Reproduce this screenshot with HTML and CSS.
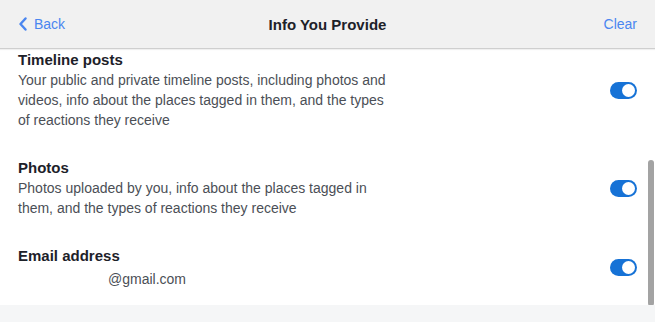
FILE: index.html
```html
<!DOCTYPE html>
<html>
<head>
<meta charset="utf-8">
<link rel="stylesheet" href="styles.css">
</head>
<body>
<div class="page">
  <header class="topbar">
    <a class="back">
      <svg class="chev" width="10" height="14" viewBox="0 0 10 14"><path d="M7.5 1.5 L2.5 7 L7.5 12.5" fill="none" stroke="#4a86f0" stroke-width="2.4" stroke-linecap="round" stroke-linejoin="round"/></svg>
      <span>Back</span>
    </a>
    <div class="title">Info You Provide</div>
    <a class="clear">Clear</a>
  </header>
  <main class="viewport">
    <div class="list">
      <section class="item">
        <div class="text">
          <div class="name">Timeline posts</div>
          <div class="desc">Your public and private timeline posts, including photos and videos, info about the places tagged in them, and the types of reactions they receive</div>
        </div>
        <div class="toggle"><div class="knob"></div></div>
      </section>
      <section class="item">
        <div class="text">
          <div class="name">Photos</div>
          <div class="desc">Photos uploaded by you, info about the places tagged in them, and the types of reactions they receive</div>
        </div>
        <div class="toggle"><div class="knob"></div></div>
      </section>
      <section class="item">
        <div class="text">
          <div class="name">Email address</div>
          <div class="desc email"><span class="hidden-part"></span>@gmail.com</div>
        </div>
        <div class="toggle"><div class="knob"></div></div>
      </section>
    </div>
    <div class="scrollthumb"></div>
  </main>
  <div class="footer"></div>
</div>
</body>
</html>
```
FILE: styles.css
```css
* { box-sizing: border-box; }
html, body { margin: 0; padding: 0; }
body {
  font-family: "Liberation Sans", Arial, sans-serif;
  background: #ffffff;
  width: 655px;
  height: 322px;
  overflow: hidden;
}
.page { display: flex; flex-direction: column; height: 322px; }
.topbar {
  height: 49px;
  flex: none;
  background: #f1f1f1;
  border-bottom: 1px solid #cfcfcf;
  display: flex;
  align-items: center;
  justify-content: space-between;
  padding: 0 18px 0 18px;
  position: relative;
  z-index: 2;
  box-shadow: 0 1px 1px rgba(0,0,0,0.06);
}
.back {
  display: flex;
  align-items: center;
  gap: 6px;
  color: #4a86f0;
  font-size: 14px;
  width: 80px;
}
.chev { display: block; }
.title {
  font-weight: bold;
  font-size: 15px;
  color: #1d2129;
}
.clear {
  color: #4a86f0;
  font-size: 14px;
  width: 80px;
  text-align: right;
}
.viewport {
  flex: 1;
  position: relative;
  overflow: hidden;
  background: #ffffff;
}
.list { margin-top: -13px; }
.item {
  display: flex;
  align-items: center;
  justify-content: space-between;
  padding: 14px 18px 14px 18px;
}
.text { width: 372px; }
.name {
  font-weight: bold;
  font-size: 15px;
  line-height: 20px;
  color: #1d2129;
}
.desc {
  font-size: 14px;
  line-height: 20px;
  color: #4b4f56;
}
.desc.email { margin-top: 3px; }
.hidden-part { display: inline-block; width: 90px; }
.toggle {
  width: 27px;
  height: 17px;
  border-radius: 9px;
  background: #1672d6;
  position: relative;
  display: flex;
  justify-content: flex-end;
  align-items: center;
  padding: 2px;
}
.knob {
  width: 13px;
  height: 13px;
  border-radius: 50%;
  background: #ffffff;
}
.scrollthumb {
  position: absolute;
  right: 1px;
  top: 111px;
  width: 6px;
  height: 146px;
  border-radius: 3px;
  background: #a3a3a3;
}
.footer {
  height: 17px;
  flex: none;
  background: #f5f6f7;
}
```
